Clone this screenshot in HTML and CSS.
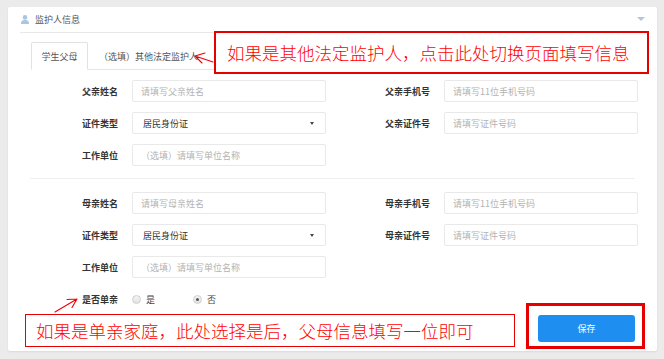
FILE: index.html
```html
<!DOCTYPE html>
<html lang="zh-CN">
<head>
<meta charset="utf-8">
<title>监护人信息</title>
<link rel="stylesheet" href="styles.css">
</head>
<body>
<div class="card">
  <div class="card-head">
    <svg class="head-icon" width="8" height="9" viewBox="0 0 8 9"><circle cx="4" cy="2.4" r="2.3" fill="#a9c6e6"/><path d="M0 9 C0 5.6 1.6 5 4 5 C6.4 5 8 5.6 8 9 Z" fill="#a9c6e6"/></svg>
    <span class="head-title">监护人信息</span>
    <span class="head-caret"></span>
  </div>
  <div class="tabs">
    <div class="tab active">学生父母</div>
    <div class="tab">（选填）其他法定监护人</div>
  </div>

  <div class="section father">
    <div class="row">
      <div class="field"><label class="lbl">父亲姓名</label><input class="inp" placeholder="请填写父亲姓名"></div>
      <div class="field"><label class="lbl">父亲手机号</label><input class="inp" placeholder="请填写11位手机号码"></div>
    </div>
    <div class="row">
      <div class="field"><label class="lbl">证件类型</label><div class="inp sel">居民身份证<span class="sel-arrow"></span></div></div>
      <div class="field"><label class="lbl">父亲证件号</label><input class="inp" placeholder="请填写证件号码"></div>
    </div>
    <div class="row">
      <div class="field"><label class="lbl">工作单位</label><input class="inp" placeholder="（选填）请填写单位名称"></div>
    </div>
  </div>

  <div class="divider"></div>

  <div class="section mother">
    <div class="row">
      <div class="field"><label class="lbl">母亲姓名</label><input class="inp" placeholder="请填写母亲姓名"></div>
      <div class="field"><label class="lbl">母亲手机号</label><input class="inp" placeholder="请填写11位手机号码"></div>
    </div>
    <div class="row">
      <div class="field"><label class="lbl">证件类型</label><div class="inp sel">居民身份证<span class="sel-arrow"></span></div></div>
      <div class="field"><label class="lbl">母亲证件号</label><input class="inp" placeholder="请填写证件号码"></div>
    </div>
    <div class="row">
      <div class="field"><label class="lbl">工作单位</label><input class="inp" placeholder="（选填）请填写单位名称"></div>
    </div>
  </div>

  <div class="radio-row">
    <label class="lbl">是否单亲</label>
    <div class="opts">
      <span class="opt"><span class="radio"></span>是</span>
      <span class="opt"><span class="radio on"></span>否</span>
    </div>
  </div>

  <div class="footer">
    <button class="btn-save">保存</button>
  </div>
</div>

<div class="note note-top">如果是其他法定监护人，点击此处切换页面填写信息</div>
<div class="note note-bottom">如果是单亲家庭，此处选择是后，父母信息填写一位即可</div>
<div class="note-frame"></div>
<svg class="arrows" width="664" height="359" viewBox="0 0 664 359">
  <g stroke="#ee0000" stroke-width="1.1" fill="none" stroke-linecap="round">
    <path d="M213 62 L195 56 M195 56 L205 53 M195 56 L202 63"/>
    <path d="M55 312 L77 299 M77 299 L67 299.5 M77 299 L72 307.5"/>
  </g>
</svg>
</body>
</html>
```

FILE: styles.css
```css
* { box-sizing: border-box; }
html, body { margin: 0; }
body {
  position: relative;
  width: 664px;
  height: 359px;
  overflow: hidden;
  background: #ebebeb;
  padding: 7px 7px 0 8px;
  font-family: "Noto Sans CJK SC", "Noto Sans", sans-serif;
  font-size: 9px;
  color: #333;
}
.card {
  background: #fff;
  width: 649px;
  border-radius: 2px;
  box-shadow: 0 1px 2px rgba(0,0,0,0.08);
  padding-bottom: 9px;
}
.card-head {
  margin: 0 12px;
  height: 26px;
  border-bottom: 1px solid #e8e8e8;
  display: flex;
  align-items: center;
  padding-left: 1px;
}
.head-icon { display: block; margin-right: 6px; margin-top: -1px; }
.head-title { color: #555; font-size: 9px; line-height: 12px; }
.head-caret {
  margin-left: auto;
  width: 0; height: 0;
  border-left: 4px solid transparent;
  border-right: 4px solid transparent;
  border-top: 4px solid #b4c6dc;
  margin-top: -1px;
}
.tabs {
  margin: 9px 22px 0 23px;
  display: flex;
  border-bottom: 1px solid #e5e5e5;
  height: 28px;
}
.tab {
  height: 28px;
  padding: 0 10px;
  line-height: 27px;
  color: #555;
  font-size: 9px;
  border: 1px solid transparent;
  margin-bottom: -1px;
}
.tab.active {
  border-color: #e2e2e2;
  border-bottom-color: #fff;
  border-radius: 2px 2px 0 0;
  background: #fff;
  width: 57px;
  text-align: center;
  padding: 0;
}
.section { padding-left: 22px; display: flex; flex-direction: column; gap: 10px; }
.father { margin-top: 10px; }
.mother { margin-top: 13px; }
.row { display: flex; gap: 16px; height: 22px; }
.field { display: flex; align-items: center; gap: 14px; width: 296px; }
.lbl {
  width: 88px;
  text-align: right;
  font-weight: bold;
  font-size: 9px;
  color: #333;
  flex: none;
}
.inp {
  width: 194px;
  height: 22px;
  border: 1px solid #e9e9e9;
  border-radius: 2px;
  padding: 0 8px;
  font-family: inherit;
  font-size: 9px;
  color: #333;
  outline: none;
  background: #fff;
}
.inp::placeholder { color: #b3b3b3; }
.sel {
  display: flex;
  align-items: center;
  padding-left: 10px;
  position: relative;
}
.sel-arrow {
  margin-left: auto;
  margin-right: 3px;
  width: 0; height: 0;
  border-left: 2.5px solid transparent;
  border-right: 2.5px solid transparent;
  border-top: 3.5px solid #444;
}
.divider {
  margin: 12px 22px 0 22px;
  height: 1px;
  background: #efefef;
}
.radio-row {
  margin-top: 14px;
  padding-left: 22px;
  display: flex;
  align-items: center;
  gap: 14px;
  height: 14px;
}
.opts { display: flex; gap: 38px; }
.opt { display: flex; align-items: center; gap: 5px; color: #444; font-size: 9px; }
.radio {
  width: 9px; height: 9px;
  border-radius: 50%;
  border: 1px solid #cfcfcf;
  background: linear-gradient(#f4f4f4, #e2e2e2);
  display: flex; align-items: center; justify-content: center;
}
.radio.on::after {
  content: "";
  width: 3px; height: 3px;
  border-radius: 50%;
  background: #555;
}
.footer {
  margin-top: 9px;
  display: flex;
  justify-content: flex-end;
  padding-right: 22px;
}
.btn-save {
  width: 97px;
  height: 27px;
  border: none;
  border-radius: 3px;
  background: #1f8ef1;
  color: #fff;
  font-family: inherit;
  font-size: 9px;
}
.note {
  position: absolute;
  border: 2px solid #e60000;
  background: #fff;
  color: #f00;
  font-size: 17.5px;
  display: flex;
  align-items: center;
  white-space: nowrap;
  font-family: "Noto Sans CJK SC", sans-serif;
  font-weight: 300;
}
.note-top { left: 214px; top: 31px; width: 435px; height: 43px; padding-left: 11px; }
.note-bottom { left: 25px; top: 314px; width: 490px; height: 33px; padding-left: 10px; border-width: 1.5px; }
.note-frame {
  position: absolute;
  left: 526px; top: 303px;
  width: 119px; height: 46px;
  border: 3px solid #e60000;
}
.arrows { position: absolute; left: 0; top: 0; pointer-events: none; }
```
